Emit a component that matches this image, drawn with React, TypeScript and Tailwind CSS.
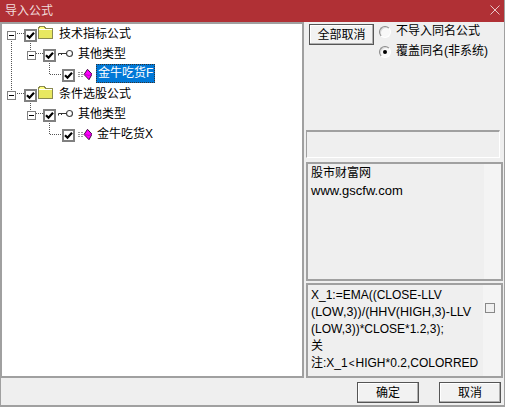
const CJK = "font-['Liberation_Sans','Noto_Sans_CJK_SC',sans-serif]";
const BTN = "border border-[#555] bg-[#f2f2f2] shadow-[inset_-1px_-1px_0_#b0b0b0,inset_1px_1px_0_#fff] text-[12px] leading-none shrink-0";
const RADIO = "w-[12px] h-[12px] rounded-full bg-[#f8f8f8] border border-t-[#8a8a8a] border-l-[#8a8a8a] border-r-[#fff] border-b-[#fff] shadow-[inset_1px_1px_0_#d8d8d8] flex items-center justify-center shrink-0";

function Exp() {
  return (
    <span className="w-[9px] h-[9px] border border-[#808080] bg-white flex items-center justify-center shrink-0">
      <span className="w-[5px] h-px bg-black" />
    </span>
  );
}

function Check() {
  return (
    <span className="w-[13px] h-[13px] border-2 border-[#808080] bg-white flex items-center justify-center shrink-0">
      <svg width="9" height="9" viewBox="0 0 9 9">
        <path d="M1 4.2 L3.5 6.7 L8 1.8" stroke="#000" strokeWidth="2.2" fill="none" />
      </svg>
    </span>
  );
}

function Folder() {
  return (
    <svg width="15" height="13" viewBox="0 0 15 13" className="shrink-0 block" shapeRendering="crispEdges">
      <path d="M0.5 12.5V1.5H1.5V0.5H6.5V1.5H7.5V2.5H14.5V12.5Z" fill="#ffff80" stroke="#8a8a50" />
      <path d="M1 3H14V12H1Z" fill="#e8e860" />
      <path d="M1 3H14" stroke="#fff" />
    </svg>
  );
}

function KeyIcon() {
  return (
    <svg width="15" height="9" viewBox="0 0 15 9" className="shrink-0 block">
      <circle cx="11.5" cy="4.5" r="3" fill="#fff" stroke="#444" strokeWidth="1.2" />
      <path d="M8.5 4.5H0.5V6.5M3.5 4.5V6" stroke="#333" fill="none" />
    </svg>
  );
}

function Gem() {
  return (
    <svg width="15" height="11" viewBox="0 0 15 11" className="shrink-0 block">
      <path d="M1 3.5H7M1 5.5H7M1 7.5H7" stroke="#999" strokeDasharray="2 1" />
      <path d="M10.5 0.3L15 5.2L12 10.7L7 5.5Z" fill="#ff00ff" stroke="#300030" strokeWidth="0.9" />
      <path d="M8 5.5L12 6.5L14.5 5" stroke="#a000a0" strokeWidth="0.6" fill="none" />
    </svg>
  );
}

function Row1({ label }: { label: string }) {
  return (
    <div className="h-5 flex items-center pl-[5px]">
      <Exp />
      <span className="ml-[8px]"><Check /></span>
      <span className="ml-px -mt-[5px]"><Folder /></span>
      <span className="ml-[6px] -mt-[2px]">{label}</span>
    </div>
  );
}

function Row2() {
  return (
    <div className="h-5 flex items-center pl-[25px]">
      <Exp />
      <span className="ml-[7px]"><Check /></span>
      <span className="ml-[2px] -mt-[3px]"><KeyIcon /></span>
      <span className="ml-[5px] -mt-[2px]">其他类型</span>
    </div>
  );
}

function Row3({ label, selected }: { label: string; selected?: boolean }) {
  return (
    <div className="h-5 flex items-center pl-[60px]">
      <Check />
      <span className="ml-[2px] -mt-[1px]"><Gem /></span>
      {selected ? (
        <span className="ml-[4px] h-[19px] -mt-[3px] px-px leading-[17px] bg-[#0078d7] text-white border border-dotted border-[#333]">{label}</span>
      ) : (
        <span className="ml-[5px] -mt-[2px]">{label}</span>
      )}
    </div>
  );
}

export default function App() {
  return (
    <div className={`w-[505px] h-[407px] bg-[#efefef] flex flex-col text-[12px] text-black overflow-hidden border-b-2 border-r border-[#a0a0a0] ${CJK}`}>
      <div className="h-[22px] -mr-px bg-[#b03035] flex items-center justify-between pl-[5px] pr-[5px] text-[#f0dcdc] shrink-0">
        <span className="-mt-px">导入公式</span>
        <svg width="10" height="10" viewBox="0 0 10 10" className="-mt-[3px]">
          <path d="M0.5 0.5L9.5 9.5M9.5 0.5L0.5 9.5" stroke="#e8c8c8" strokeWidth="1" />
        </svg>
      </div>

      <div className="flex h-[356px] shrink-0">
        <div className="relative w-[304px] h-[356px] bg-white border-2 border-[#a0a0a0] pt-px shrink-0">
          <svg className="absolute left-0 top-0" width="100" height="130">
            <path d="M9.5 15V66M15 9.5H22M28.5 19V26M34 29.5H41M47.5 39V50.5H60" stroke="#555" strokeDasharray="1 1" fill="none" />
            <path d="M15 69.5H22M28.5 79V86M34 89.5H41M47.5 99V110.5H60" stroke="#555" strokeDasharray="1 1" fill="none" />
          </svg>
          <div className="relative">
            <Row1 label="技术指标公式" />
            <Row2 />
            <Row3 label="金牛吃货F" selected />
            <Row1 label="条件选股公式" />
            <Row2 />
            <Row3 label="金牛吃货X" />
          </div>
        </div>

        <div className="flex-1 flex flex-col pl-[2px] pr-px">
          <div className="h-[108px] flex items-start shrink-0 pl-[3px]">
            <button className={`w-[65px] h-[21px] mt-[2px] ${BTN}`}>全部取消</button>
            <div className="ml-[5px] flex flex-col">
              <label className="h-[20px] flex items-center">
                <span className={RADIO} />
                <span className="ml-[5px] -mt-[2px]">不导入同名公式</span>
              </label>
              <label className="h-[20px] flex items-center">
                <span className={RADIO}>
                  <span className="w-[4px] h-[4px] rounded-full bg-black" />
                </span>
                <span className="ml-[5px] -mt-[2px]">覆盖同名(非系统)</span>
              </label>
            </div>
          </div>
          <div className="h-[28px] mr-[3px] border-t-2 border-l border-r border-[#a0a0a0] border-b border-b-white border-r-white shrink-0" />
          <div className="h-[119px] mt-[4px] border-2 border-[#a0a0a0] bg-[#f4f4f4] flex shrink-0">
            <div className="w-[176px] bg-[#efefef] pl-[3px] pt-px leading-[17px]">
              <div>股市财富网</div>
              <div className="text-[13px]">www.gscfw.com</div>
            </div>
          </div>
          <div className="h-[95px] mt-[2px] border-2 border-[#a0a0a0] bg-[#f4f4f4] flex shrink-0">
            <div className="w-[175px] bg-[#efefef] pl-[3px] pt-[2px] leading-[17px] whitespace-nowrap">
              <div>X_1:=EMA((CLOSE-LLV</div>
              <div className="text-[12.5px]">(LOW,3))/(HHV(HIGH,3)-LLV</div>
              <div>(LOW,3))*CLOSE*1.2,3);</div>
              <div>关</div>
              <div>注:X_1<span className="text-[10px] mx-px">&lt;</span>HIGH*0.2,COLORRED</div>
            </div>
            <span className="ml-[2px] mt-[18px] w-[10px] h-[10px] border border-[#888] bg-[#f0f0f0]" />
          </div>
        </div>
      </div>

      <div className="flex-1 flex justify-end items-start pt-[4px] pr-[3px] border-l border-[#a0a0a0]">
        <button className={`w-[62px] h-[21px] ${BTN}`}>确定</button>
        <button className={`ml-[20px] w-[62px] h-[21px] ${BTN}`}>取消</button>
      </div>
    </div>
  );
}
